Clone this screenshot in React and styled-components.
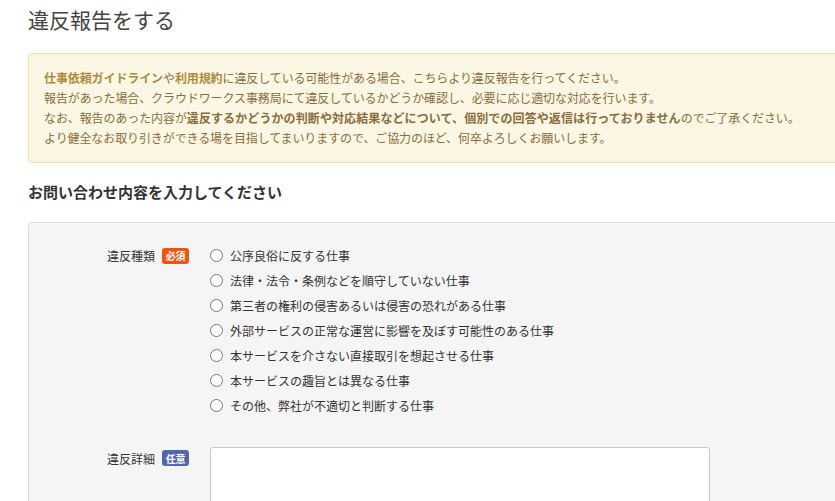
import React from "react";
import styled, { createGlobalStyle } from "styled-components";

const GlobalStyle = createGlobalStyle`
  html, body {
    margin: 0;
    padding: 0;
    overflow: hidden;
    background: #fff;
  }
  body {
    font-family: Meiryo, "Noto Sans CJK JP", "Noto Sans", sans-serif;
    color: #333;
  }
`;

const Page = styled.div`
  width: 900px;
  padding: 0 0 0 28px;
`;

const Title = styled.h1`
  margin: 0;
  padding-top: 5px;
  font-size: 21px;
  line-height: 28px;
  font-weight: 400;
  color: #444;
`;

const Alert = styled.div`
  margin-top: 20px;
  border: 1px solid #f0e0a8;
  border-radius: 4px;
  background: #fcf7e4;
  color: #8a6d3b;
  font-size: 12px;
  line-height: 20px;
  letter-spacing: -0.1px;
  padding: 14px 15px 14px 15px;
`;

const Line = styled.p`
  margin: 0;
  white-space: nowrap;
`;

const Link = styled.span`
  color: #ab8c3b;
  font-weight: 700;
`;

const Strong = styled.strong`
  font-weight: 700;
  letter-spacing: 0.1px;
`;

const SectionHeading = styled.h2`
  margin: 18px 0 0;
  font-size: 15px;
  line-height: 22px;
  font-weight: 700;
  color: #333;
`;

const Panel = styled.div`
  margin-top: 19px;
  background: #f5f5f5;
  border: 1px solid #dcdcdc;
  border-radius: 4px;
  padding: 20px 0 40px;
  display: flex;
  flex-direction: column;
  gap: 29px;
`;

const Row = styled.div`
  display: grid;
  grid-template-columns: 160px 1fr;
  column-gap: 21px;
`;

const LabelCell = styled.div`
  display: flex;
  justify-content: flex-end;
  align-items: center;
  gap: 7px;
  height: ${(p) => p.$h || 25}px;
  font-size: 12px;
  color: #333;
`;

const Badge = styled.span`
  display: inline-flex;
  align-items: center;
  justify-content: center;
  width: 27px;
  height: 16px;
  border-radius: 3px;
  background: ${(p) => (p.$kind === "required" ? "#f2520f" : "#5167ad")};
  color: #fff;
  font-size: 10px;
  font-weight: 700;
  letter-spacing: -0.3px;
`;

const RadioList = styled.div`
  display: flex;
  flex-direction: column;
`;

const RadioRow = styled.label`
  display: flex;
  align-items: center;
  height: 25px;
  gap: 7px;
  font-size: 12px;
  color: #333;
  white-space: nowrap;
`;

const RadioCircle = styled.span`
  width: 11px;
  height: 11px;
  border: 1px solid #777;
  border-radius: 50%;
  background: #fff;
  flex: none;
`;

const TextArea = styled.div`
  width: 498px;
  height: 110px;
  background: #fff;
  border: 1px solid #c8c8c8;
  border-radius: 3px;
`;

const options = [
  "公序良俗に反する仕事",
  "法律・法令・条例などを順守していない仕事",
  "第三者の権利の侵害あるいは侵害の恐れがある仕事",
  "外部サービスの正常な運営に影響を及ぼす可能性のある仕事",
  "本サービスを介さない直接取引を想起させる仕事",
  "本サービスの趣旨とは異なる仕事",
  "その他、弊社が不適切と判断する仕事",
];

export default function App() {
  return (
    <Page>
      <GlobalStyle />
      <Title>違反報告をする</Title>
      <Alert>
        <Line>
          <Link>仕事依頼ガイドライン</Link>や<Link>利用規約</Link>
          に違反している可能性がある場合、こちらより違反報告を行ってください。
        </Line>
        <Line>
          報告があった場合、クラウドワークス事務局にて違反しているかどうか確認し、必要に応じ適切な対応を行います。
        </Line>
        <Line>
          なお、報告のあった内容が
          <Strong>
            違反するかどうかの判断や対応結果などについて、個別での回答や返信は行っておりません
          </Strong>
          のでご了承ください。
        </Line>
        <Line>
          より健全なお取り引きができる場を目指してまいりますので、ご協力のほど、何卒よろしくお願いします。
        </Line>
      </Alert>
      <SectionHeading>お問い合わせ内容を入力してください</SectionHeading>
      <Panel>
        <Row>
          <div>
            <LabelCell>
              違反種類<Badge $kind="required">必須</Badge>
            </LabelCell>
          </div>
          <RadioList>
            {options.map((o) => (
              <RadioRow key={o}>
                <RadioCircle />
                {o}
              </RadioRow>
            ))}
          </RadioList>
        </Row>
        <Row>
          <div>
            <LabelCell $h={22}>
              違反詳細<Badge $kind="optional">任意</Badge>
            </LabelCell>
          </div>
          <div>
            <TextArea />
          </div>
        </Row>
      </Panel>
    </Page>
  );
}
